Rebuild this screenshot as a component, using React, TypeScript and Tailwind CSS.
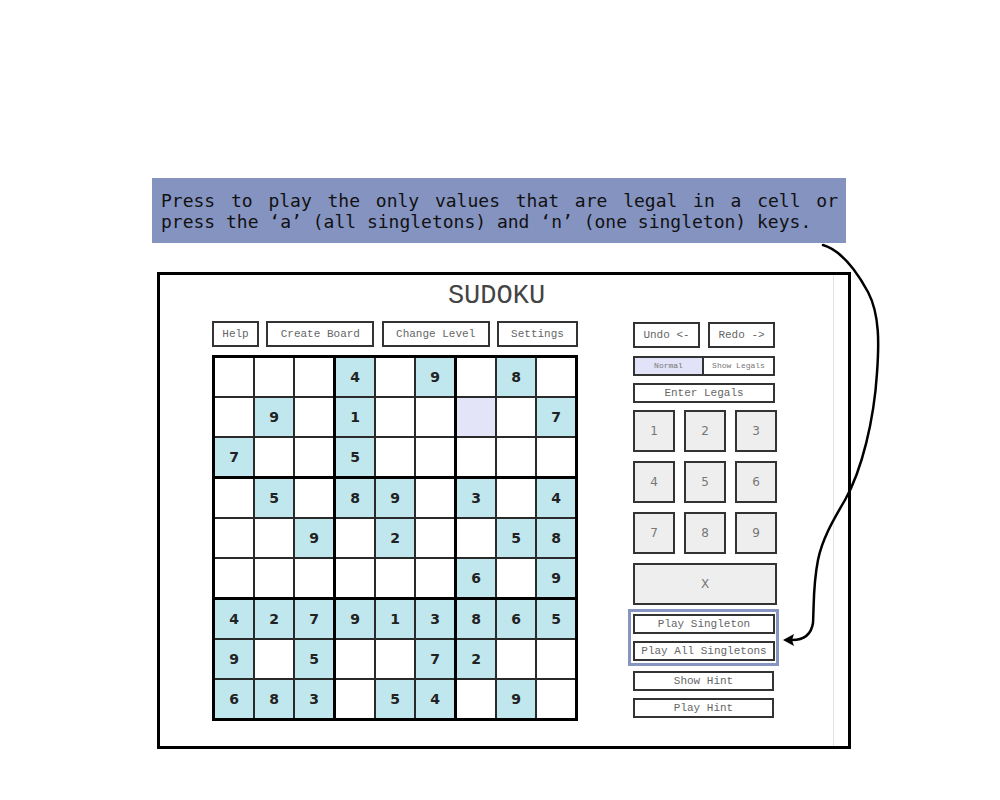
import React from 'react';

const board: number[][] = [
  [0, 0, 0, 4, 0, 9, 0, 8, 0],
  [0, 9, 0, 1, 0, 0, 0, 0, 7],
  [7, 0, 0, 5, 0, 0, 0, 0, 0],
  [0, 5, 0, 8, 9, 0, 3, 0, 4],
  [0, 0, 9, 0, 2, 0, 0, 5, 8],
  [0, 0, 0, 0, 0, 0, 6, 0, 9],
  [4, 2, 7, 9, 1, 3, 8, 6, 5],
  [9, 0, 5, 0, 0, 7, 2, 0, 0],
  [6, 8, 3, 0, 5, 4, 0, 9, 0],
];

const mono = { fontFamily: '"Liberation Mono", "Courier New", monospace' };

function Cell({ r, c }: { r: number; c: number }) {
  const v = board[r][c];
  const selected = r === 1 && c === 6;
  return (
    <div
      className={
        'w-[38px] h-[38px] flex items-center justify-center text-[14px] font-bold text-[#222] ' +
        (selected ? 'bg-[#e4e4f8]' : v ? 'bg-[#c1e7ee]' : 'bg-white')
      }
      style={{ fontFamily: '"DejaVu Sans", sans-serif' }}
    >
      {v ? v : ''}
    </div>
  );
}

function Board() {
  return (
    <div className="grid grid-cols-3 gap-[3px] bg-black p-[3px] w-[366px]">
      {[0, 1, 2].map((br) =>
        [0, 1, 2].map((bc) => (
          <div key={`${br}-${bc}`} className="grid grid-cols-3 gap-[2px] bg-[#2a2a2a]">
            {[0, 1, 2].map((i) =>
              [0, 1, 2].map((j) => <Cell key={`${i}-${j}`} r={br * 3 + i} c={bc * 3 + j} />)
            )}
          </div>
        ))
      )}
    </div>
  );
}

function Btn({ label, className = '' }: { label: string; className?: string }) {
  return (
    <div
      className={'border-2 border-[#333] bg-white flex items-center justify-center text-[11px] text-[#666] ' + className}
      style={mono}
    >
      {label}
    </div>
  );
}

function Key({ label, className = 'w-[42px]' }: { label: string; className?: string }) {
  return (
    <div
      className={'h-[42px] border-2 border-[#333] bg-[#eeeeee] flex items-center justify-center text-[12px] text-[#777] ' + className}
      style={{ fontFamily: '"DejaVu Sans", sans-serif' }}
    >
      {label}
    </div>
  );
}

export default function App() {
  return (
    <div className="relative w-[1000px] h-[800px] bg-white overflow-hidden">
      {/* annotation banner */}
      <div
        className="ml-[152px] mt-[178px] w-[694px] h-[65px] bg-[#8593c1] pt-[12px] pl-[9px] pr-[8px] text-[18px] leading-[21px] text-[#111] text-justify"
        style={{ fontFamily: '"DejaVu Sans Mono", monospace' }}
      >
        Press to play the only values that are legal in a cell or press the ‘a’ (all singletons) and ‘n’ (one singleton) keys.
      </div>

      {/* app frame */}
      <div className="ml-[157px] mt-[29px] w-[694px] h-[477px] border-[3px] border-black flex">
        <div className="flex-1 flex flex-col">
          <div className="pt-[7px] mb-[11px] text-center text-[27px] leading-[28px] text-[#444]" style={mono}>
            SUDOKU
          </div>
          <div className="flex pl-[52px] gap-[55px]">
            <div className="flex flex-col gap-[8px]">
              <div className="flex justify-between w-[366px] h-[26px]">
                <Btn label="Help" className="w-[47px]" />
                <Btn label="Create Board" className="w-[108px]" />
                <Btn label="Change Level" className="w-[108px]" />
                <Btn label="Settings" className="w-[81px]" />
              </div>
              <Board />
            </div>

            <div className="mt-[1px] flex flex-col w-[144px]">
              <div className="flex gap-[8px] h-[26px]">
                <Btn label="Undo <-" className="w-[67px]" />
                <Btn label="Redo ->" className="w-[67px]" />
              </div>
              <div className="flex mt-[8px] h-[20px] w-[142px]">
                <div
                  className="w-[71px] border-2 border-[#333] bg-[#e2e2f8] flex items-center justify-center text-[8px] text-[#777]"
                  style={mono}
                >
                  Normal
                </div>
                <div
                  className="w-[71px] border-2 border-l-0 border-[#333] bg-white flex items-center justify-center text-[8px] text-[#777]"
                  style={mono}
                >
                  Show Legals
                </div>
              </div>
              <Btn label="Enter Legals" className="mt-[7px] h-[20px] w-[142px]" />
              <div className="mt-[7px] grid grid-cols-3 gap-x-[9px] gap-y-[9px] w-[144px]">
                {['1', '2', '3', '4', '5', '6', '7', '8', '9'].map((n) => (
                  <Key key={n} label={n} />
                ))}
              </div>
              <Key label="X" className="mt-[9px] w-[144px]" />
              <div className="mt-[4px] -ml-[5px] w-[151px] border-[3px] border-[#8795c3] pt-[2px] pb-[2px] pl-[2px] flex flex-col gap-[7px]">
                <Btn label="Play Singleton" className="h-[20px] w-[142px]" />
                <Btn label="Play All Singletons" className="h-[20px] w-[142px]" />
              </div>
              <Btn label="Show Hint" className="mt-[5px] h-[20px] w-[141px]" />
              <Btn label="Play Hint" className="mt-[7px] h-[20px] w-[141px]" />
            </div>
          </div>
        </div>
        <div className="w-[15px] border-l border-[#e2e2ea]" />
      </div>

      {/* annotation arrow */}
      <svg className="absolute inset-0 pointer-events-none" width="1000" height="800" viewBox="0 0 1000 800">
        <path
          d="M823 245 C 840 250, 856 270, 868 292 C 880 315, 879 345, 877 373 C 874 420, 862 470, 845 500 C 832 522, 822 540, 818 560 C 813 585, 814 605, 813 623 C 811 636, 803 640, 792 640"
          fill="none"
          stroke="#000"
          strokeWidth="2.5"
          strokeLinecap="round"
        />
        <polygon points="783,640 794,634 792,640 794,646" fill="#000" />
      </svg>
    </div>
  );
}
